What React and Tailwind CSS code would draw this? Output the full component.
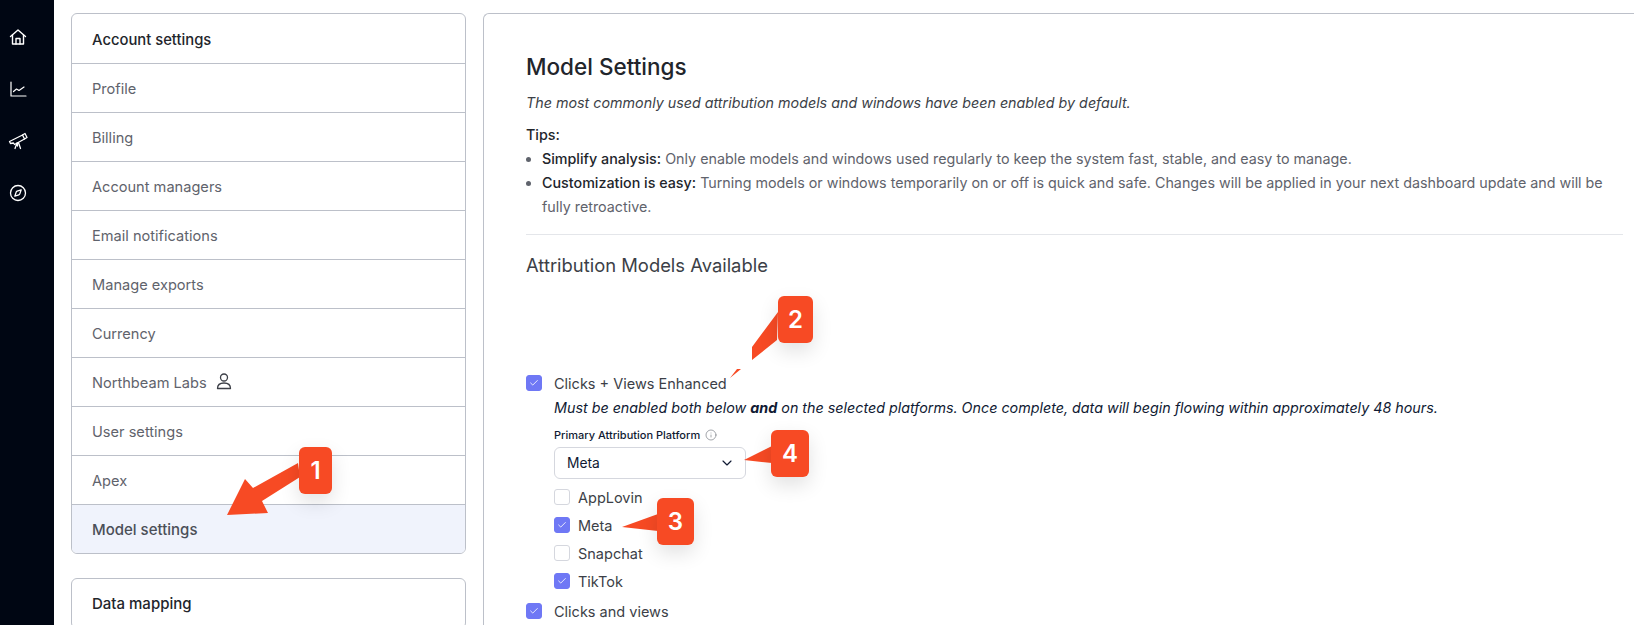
import { ChevronDown, Check, Info, Compass } from 'lucide-react';

const rows = ['Profile', 'Billing', 'Account managers', 'Email notifications', 'Manage exports', 'Currency', 'Northbeam Labs', 'User settings', 'Apex'];

function Checkbox({ on }) {
  return (
    <span className={`flex h-4 w-4 shrink-0 items-center justify-center rounded-[3px] border ${on ? 'border-[#6f78f5] bg-[#6f78f5]' : 'border-[#d5d7de] bg-white'}`}>
      {on && <Check size={10} strokeWidth={2} className="text-white" />}
    </span>
  );
}

function CheckRow({ on, label, className = '' }) {
  return (
    <div className={`flex items-center gap-[12px] text-[14.5px] leading-[20px] text-[#3c3f47] ${className}`}>
      <Checkbox on={on} />
      <span className="relative top-[1px]">{label}</span>
    </div>
  );
}

function Marker({ n, box, arrow }) {
  return (
    <>
      <svg className="absolute left-0 top-0 pointer-events-none" width="1634" height="625">
        <path d={arrow} fill="#f74a24" />
      </svg>
      <div className={`absolute flex items-center justify-center rounded-[6px] bg-[#f74a24] text-[24px] font-semibold text-white shadow-[0_8px_20px_rgba(0,0,0,0.12)] ${box}`}>
        {n}
      </div>
    </>
  );
}

function RailIcon({ children }) {
  return <div className="flex h-[18px] w-[18px] items-center justify-center">{children}</div>;
}

export default function App() {
  return (
    <div className="relative flex h-[625px] w-[1634px] overflow-hidden bg-white font-['Inter',sans-serif]">
      {/* Left rail */}
      <div className="flex w-[54px] shrink-0 flex-col gap-[34px] bg-[#000613] pl-[9px] pt-[28px] text-white">
        <RailIcon>
          <svg width="18" height="18" viewBox="0 0 18 18" fill="none" stroke="currentColor" strokeWidth="1.4" strokeLinecap="round" strokeLinejoin="round" className="shrink-0">
            <path d="M1.5 8.5 9 2l7.5 6.5" />
            <path d="M3.5 7v9h11V7" />
            <path d="M7 16v-5.5h4V16" />
          </svg>
        </RailIcon>
        <RailIcon>
          <svg width="18" height="18" viewBox="0 0 18 18" fill="none" stroke="currentColor" strokeWidth="1.2" strokeLinecap="round" strokeLinejoin="round" className="shrink-0">
            <path d="M2 2v14h15" />
            <path d="M4.5 11.5l3-2.5 2.5 1.5 5-3.5" />
          </svg>
        </RailIcon>
        <RailIcon>
          <svg width="20" height="18" viewBox="0 0 20 18" fill="none" stroke="currentColor" strokeWidth="1.3" strokeLinecap="round" strokeLinejoin="round" className="shrink-0">
            <path d="M1.5 9.5l13-6.5 2 4-10 5.5-1-1.5-3 .5z" />
            <path d="M14.5 3l2.5-1.5 2 4-2.5 1.5" />
            <path d="M9 11l-2 5.5M10.5 10.5l2 6M9.5 11v3" />
          </svg>
        </RailIcon>
        <RailIcon>
          <Compass size={18} strokeWidth={1.75} className="shrink-0" />
        </RailIcon>
      </div>

      {/* Settings nav */}
      <div className="ml-[17px] mt-[13px] flex w-[395px] shrink-0 flex-col gap-[24px]">
        <div className="shrink-0 overflow-hidden rounded-[6px] border border-[#bcc0c9]">
          <div className="flex h-[49px] items-center pl-[20px] pt-[3px] text-[14.8px] font-medium text-[#22252b]">Account settings</div>
          {rows.map(r => (
            <div key={r} className="flex h-[49px] items-center gap-[8px] border-t border-[#bcc0c9] pl-[20px] pt-[4px] text-[14.6px] text-[#5f636c]">
              {r}
              {r === 'Northbeam Labs' && (
                <svg width="18" height="18" viewBox="0 0 18 18" fill="none" stroke="#3c3f47" strokeWidth="1.3" strokeLinecap="round" strokeLinejoin="round" className="relative -top-[3px]">
                  <circle cx="9" cy="5.5" r="3.5" />
                  <path d="M2.5 16.5c0-3.5 2.500-5.500 6.500-5.500s6.500 2 6.500 5.500z" />
                </svg>
              )}
            </div>
          ))}
          <div className="flex h-[49px] items-center border-t border-[#bcc0c9] bg-[#f0f3fc] pl-[20px] pt-[2px] text-[15px] font-medium text-[#4b4f58]">Model settings</div>
        </div>
        <div className="shrink-0 rounded-[6px] border border-[#bcc0c9]">
          <div className="flex h-[49px] items-center pl-[20px] pt-[2px] text-[15px] font-medium text-[#22252b]">Data mapping</div>
        </div>
      </div>

      {/* Main panel */}
      <div className="ml-[17px] mt-[13px] min-w-0 flex-1 rounded-tl-[6px] border-l border-t border-[#bcc0c9] pl-[42px] pr-[11px] pt-[39px]">
        <h1 className="text-[22.5px] font-medium leading-[28px] text-[#22252b]">Model Settings</h1>
        <p className="mt-[12px] text-[14.3px] italic leading-[20px] text-[#3c3f47]">The most commonly used attribution models and windows have been enabled by default.</p>
        <p className="mt-[10px] text-[14.3px] font-medium leading-[24px] text-[#22252b]">Tips:</p>
        <ul className="list-disc pl-[16px] text-[14.3px] leading-[24px] text-[#5f636c]">
          <li><span className="font-medium text-[#22252b]">Simplify analysis:</span> Only enable models and windows used regularly to keep the system fast, stable, and easy to manage.</li>
          <li><span className="font-medium text-[#22252b]">Customization is easy:</span> Turning models or windows temporarily on or off is quick and safe. Changes will be applied in your next dashboard update and will be fully retroactive.</li>
        </ul>
        <div className="mt-[15px] border-t border-[#e4e6ea]" />
        <h2 className="mt-[16px] text-[18.4px] leading-[28px] text-[#3c3f47]">Attribution Models Available</h2>

        <CheckRow on label="Clicks + Views Enhanced" className="mt-[94px]" />
        <div className="pl-[28px]">
          <p className="mt-[5px] text-[14.3px] italic leading-[20px] text-[#101a33]">Must be enabled both below <b className="font-bold">and</b> on the selected platforms. Once complete, data will begin flowing within approximately 48 hours.</p>
          <div className="mt-[9px] flex items-center gap-[5px] text-[11px] font-medium leading-[16px] text-[#101a33]">
            Primary Attribution Platform <Info size={12} strokeWidth={1.25} className="text-[#6b7078]" />
          </div>
          <div className="mt-[4px] flex h-[32px] w-[192px] items-center justify-between rounded-[6px] border border-[#d5d7de] pl-[12px] pr-[10px] text-[13.8px] text-[#101a33]">
            Meta <ChevronDown size={16} strokeWidth={1.75} />
          </div>
          <div className="mt-[10px] flex flex-col gap-[12px] [&>div]:h-[16px] [&>div]:gap-[8px]">
            <CheckRow label="AppLovin" />
            <CheckRow on label="Meta" />
            <CheckRow label="Snapchat" />
            <CheckRow on label="TikTok" />
          </div>
        </div>
        <CheckRow on label="Clicks and views" className="mt-[12px]" />
      </div>

      {/* Annotations */}
      <Marker n="1" box="left-[299px] top-[447px] h-[47px] w-[33px]" arrow="M298 463 L253 488 L245 479 L227 515 L268 513 L262 501 L300 477 Z" />
      <Marker n="2" box="left-[778px] top-[296px] h-[47px] w-[35px]" arrow="M778 312 L752 347 L752 360 L777 340 Z M730 378 L737 369 L741 369 Z" />
      <Marker n="3" box="left-[657px] top-[498px] h-[47px] w-[37px]" arrow="M658 514 L622 527 L658 531 Z" />
      <Marker n="4" box="left-[771px] top-[430px] h-[47px] w-[38px]" arrow="M772 446 L744 460 L772 463 Z" />
    </div>
  );
}
